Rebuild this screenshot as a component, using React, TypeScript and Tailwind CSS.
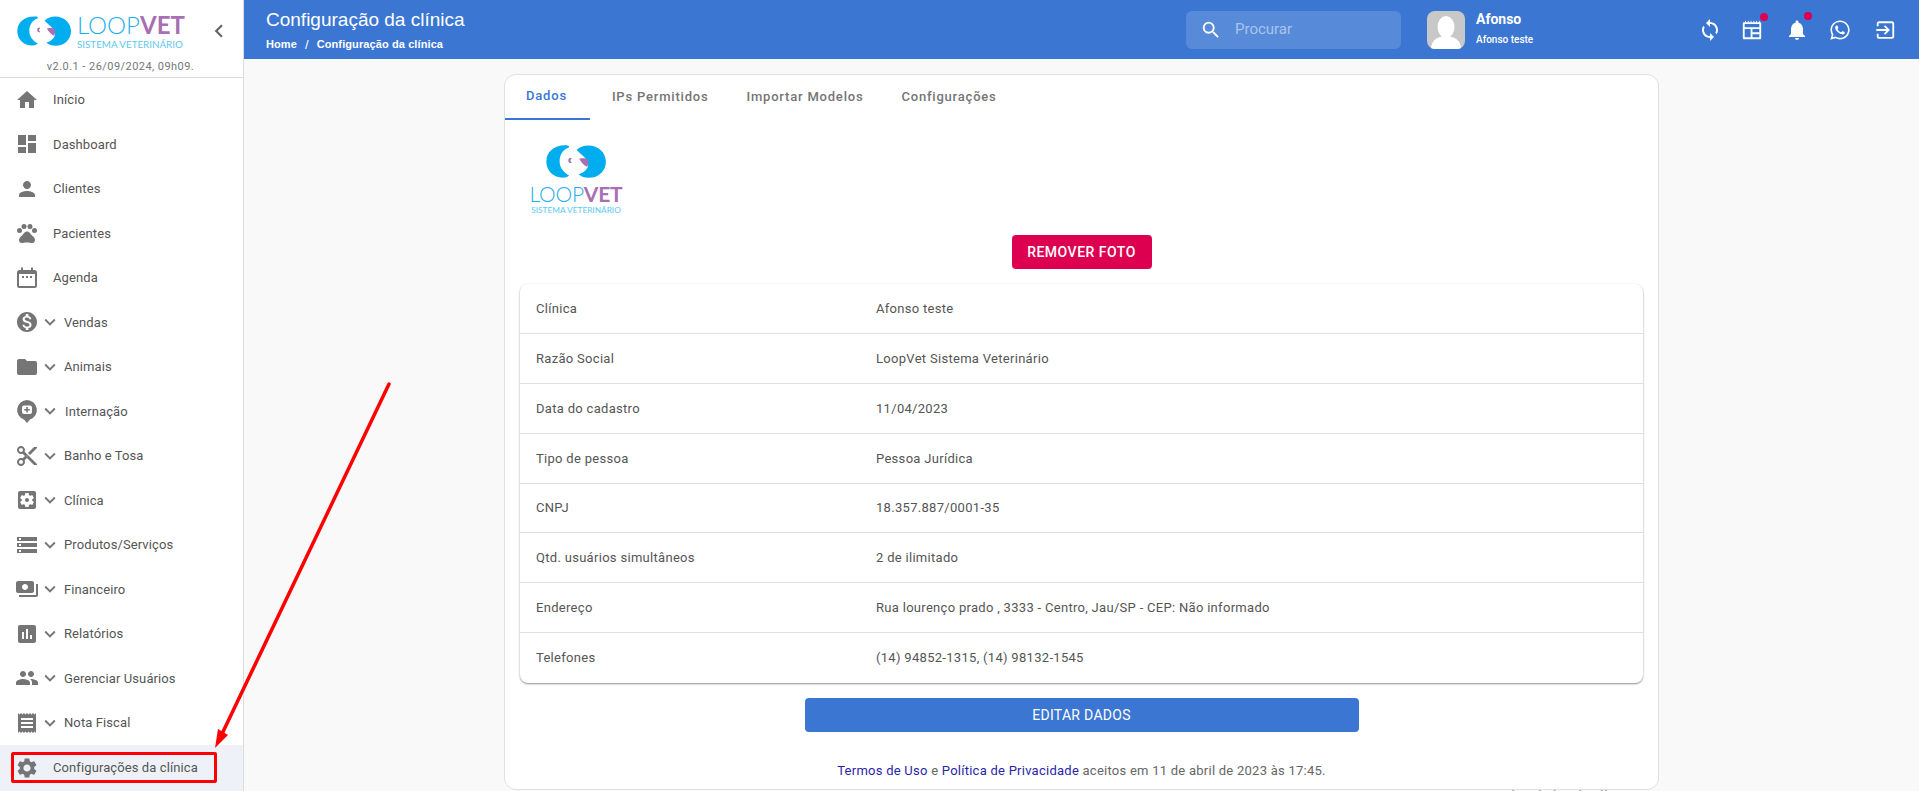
import { FaWhatsapp } from "react-icons/fa";
import {
  MdAssessment,
  MdChevronLeft,
  MdContentCut,
  MdDashboard,
  MdFolder,
  MdHome,
  MdKeyboardArrowDown,
  MdMonetizationOn,
  MdNotifications,
  MdPayments,
  MdPeople,
  MdPerson,
  MdPets,
  MdReceipt,
  MdSearch,
  MdSettings,
  MdSettingsApplications,
  MdStorage,
  MdSync,
} from "react-icons/md";
import type { ComponentType } from "react";

type IconProps = { size?: number; className?: string };

function AgendaIcon({ size = 24, className }: IconProps) {
  return (
    <svg width={size} height={size} viewBox="0 0 24 24" className={className} fill="currentColor">
      <path d="M6 1.500h2v2.500h8V1.500h2V4h1.500A2.500 2.500 0 0 1 22 6.500v13a2.500 2.500 0 0 1-2.500 2.500h-15A2.500 2.500 0 0 1 2 19.500v-13A2.500 2.500 0 0 1 4.500 4H6z" />
      <rect x="4" y="8" width="16" height="12" fill="#fff" />
      <rect x="7" y="10" width="2" height="2" />
      <rect x="11" y="10" width="2" height="2" />
      <rect x="15" y="10" width="2" height="2" />
    </svg>
  );
}

function InternacaoIcon({ size = 24, className }: IconProps) {
  return (
    <svg width={size} height={size} viewBox="0 0 24 24" className={className} fill="currentColor">
      <path d="M12 1a10 10 0 0 1 3 19.500L12 24l-3-3.500A10 10 0 0 1 12 1z" />
      <rect x="7" y="6.500" width="10" height="8.500" rx="2" fill="#fff" />
      <path d="M11.200 8h1.600v2h2v1.600h-2v2h-1.600v-2h-2V10h2z" />
    </svg>
  );
}

function NewsIcon({ size = 24, className }: IconProps) {
  return (
    <svg width={size} height={size} viewBox="0 0 24 24" className={className} fill="none" stroke="currentColor" strokeWidth="2">
      <path d="M3 4.500h18V21H3z" strokeLinejoin="round" />
      <path d="M3 10h18M11.500 10V21M11.500 15.500h9.500" />
      <path d="M5 2v2M8 2v2M11 2v2M14 2v2M17 2v2M20 2v2" strokeWidth="1" />
    </svg>
  );
}

function ExitIcon({ size = 24, className }: IconProps) {
  return (
    <svg width={size} height={size} viewBox="0 0 24 24" className={className} fill="none" stroke="currentColor" strokeWidth="2">
      <path d="M4 8V5a1.500 1.500 0 0 1 1.500-1.500h14A1.500 1.500 0 0 1 21 5v14a1.500 1.500 0 0 1-1.500 1.500h-14A1.500 1.500 0 0 1 4 19v-3" />
      <path d="M2.500 12h13M11.500 7.500l4.500 4.500-4.500 4.500" />
    </svg>
  );
}

function LogoMark({ className }: { className?: string }) {
  return (
    <svg viewBox="0 0 56 30" className={className}>
      <path fill="#00aeef" d="M20 .3C8 -.8 .3 6 .3 15c0 9 7 15 15.500 14.800 2.500 0 4-.7 5.400-2C16 25 12.500 20.500 12.500 15 12.500 9.500 15 4 21 2.200c.5-1 0-1.700-1-1.900z" />
      <path fill="#00aeef" d="M28 4.500C31 1.500 35 .2 39 .2c9 0 16 6.500 16 15 0 8.500-7 14.800-15.500 14.800-4 0-7.500-1-9.500-3.200 3-1 6.500-2.800 8-6 1.500-3 .5-6-1.500-8.300-2.300-2.700-5.500-5-8.500-8z" />
      <path fill="#a86fb3" d="M30.500 12.500c3-.8 6.500-.5 8 .8 1 2 .3 4.800-.8 6.500-2.500-.5-5-3.500-7.200-7.300z" />
      <path fill="#a86fb3" d="M23 11.500a2.500 2.500 0 1 0 0 5l.7-.8a1.700 1.700 0 0 1 0-3.300z" />
    </svg>
  );
}

type NavItem = { label: string; icon: ComponentType<IconProps>; sub?: boolean; wide?: boolean };

const NAV_ITEMS: NavItem[] = [
  { label: "Início", icon: MdHome },
  { label: "Dashboard", icon: MdDashboard },
  { label: "Clientes", icon: MdPerson },
  { label: "Pacientes", icon: MdPets },
  { label: "Agenda", icon: AgendaIcon },
  { label: "Vendas", icon: MdMonetizationOn, sub: true },
  { label: "Animais", icon: MdFolder, sub: true },
  { label: "Internação", icon: InternacaoIcon, sub: true, wide: true },
  { label: "Banho e Tosa", icon: MdContentCut, sub: true },
  { label: "Clínica", icon: MdSettingsApplications, sub: true },
  { label: "Produtos/Serviços", icon: MdStorage, sub: true },
  { label: "Financeiro", icon: MdPayments, sub: true },
  { label: "Relatórios", icon: MdAssessment, sub: true },
  { label: "Gerenciar Usuários", icon: MdPeople, sub: true },
  { label: "Nota Fiscal", icon: MdReceipt, sub: true },
];

const ROWS = [
  ["Clínica", "Afonso teste"],
  ["Razão Social", "LoopVet Sistema Veterinário"],
  ["Data do cadastro", "11/04/2023"],
  ["Tipo de pessoa", "Pessoa Jurídica"],
  ["CNPJ", "18.357.887/0001-35"],
  ["Qtd. usuários simultâneos", "2 de ilimitado"],
  ["Endereço", "Rua lourenço prado , 3333 - Centro, Jau/SP - CEP: Não informado"],
  ["Telefones", "(14) 94852-1315, (14) 98132-1545"],
];

const TABS = ["Dados", "IPs Permitidos", "Importar Modelos", "Configurações"];

function Sidebar() {
  return (
    <aside className="flex w-[244px] shrink-0 flex-col border-r border-[#dcdcdc] bg-white">
      <div className="flex h-[59px] items-center pl-[17px] pt-[4px]">
        <LogoMark className="h-[30px] w-[55px]" />
        <div className="ml-[5px] flex w-[106px] flex-col">
          <span className="text-[24px] leading-[22px] text-[#1cb0ee] font-['Lato',sans-serif] font-light">
            LOOP<span className="font-bold text-[#a86fb3]">VET</span>
          </span>
          <span className="mt-[3px] whitespace-nowrap text-[9.800px] leading-[10px] text-[#5cc8f2] font-['Lato',sans-serif]">SISTEMA VETERINÁRIO</span>
        </div>
        <MdChevronLeft size={26} className="ml-[23px] text-[#666]" />
      </div>
      <div className="flex h-[19px] items-center justify-center border-b border-[#dcdcdc] pb-[1px] pr-[2px] text-[11px] tracking-[0.45px] text-[#777]">
        v2.0.1 - 26/09/2024, 09h09.
      </div>
      <nav className="flex flex-col">
        {NAV_ITEMS.map((item) => (
          <div key={item.label} className="flex h-[44.500px] items-center pl-[14px] text-[13px] tracking-[0.1px] text-[#555]">
            <span className="flex w-[26px] shrink-0 justify-center text-[#757575]">
              <item.icon size={24} />
            </span>
            {item.sub ? (
              <>
                <MdKeyboardArrowDown size={22} className="-ml-[1px] text-[#777]" />
                <span className={item.wide ? "ml-[4px]" : "ml-[3px]"}>{item.label}</span>
              </>
            ) : (
              <span className="ml-[13px]">{item.label}</span>
            )}
          </div>
        ))}
        <div className="flex h-[46px] items-center bg-[#eef2f8] pl-[14px] text-[13px] tracking-[0.1px] text-[#555]">
          <span className="flex w-[26px] shrink-0 justify-center text-[#757575]">
            <MdSettings size={24} />
          </span>
          <span className="ml-[13px]">Configurações da clínica</span>
        </div>
      </nav>
    </aside>
  );
}

function Header() {
  return (
    <header className="flex h-[59px] shrink-0 items-center bg-[#3a76d2] pl-[22px] text-white">
      <div className="w-[920px] font-['Liberation_Sans',sans-serif]">
        <div className="text-[19px] leading-[22px]">Configuração da clínica</div>
        <div className="mt-[7px] flex items-center text-[11px] font-bold leading-[13px] tracking-[0.1px]">
          Home <span className="mx-[8px] text-[13px] font-normal">/</span> Configuração da clínica
        </div>
      </div>
      <div className="flex h-[38px] w-[215px] items-center rounded-md bg-white/15 pl-[14px]">
        <MdSearch size={22} />
        <span className="ml-[13px] text-[15px] text-white/50">Procurar</span>
      </div>
      <div className="ml-[26px] flex h-[38px] w-[38px] items-end justify-center overflow-hidden rounded-lg bg-[#c8c8c8]">
        <svg width="30" height="33" viewBox="0 0 30 33" fill="#fff">
          <ellipse cx="15" cy="11" rx="8.500" ry="11" />
          <path d="M0 33c0-8 6-13 15-13s15 5 15 13z" />
        </svg>
      </div>
      <div className="ml-[11px] w-[222px]">
        <div className="-mt-[2px] text-[14px] font-bold leading-[16px]">Afonso</div>
        <div className="mt-[7px] text-[10px] font-medium leading-[12px]">Afonso teste</div>
      </div>
      <div className="flex items-center gap-[19px]">
        <MdSync size={24} />
        <span className="relative flex">
          <NewsIcon size={22} />
          <span className="absolute -right-[5px] -top-[6px] h-[8px] w-[8px] rounded-full bg-[#de0050]" />
        </span>
        <span className="relative ml-[3px] flex">
          <MdNotifications size={24} />
          <span className="absolute -right-[3px] -top-[6px] h-[8px] w-[8px] rounded-full bg-[#de0050]" />
        </span>
        <FaWhatsapp size={22} className="ml-[1px]" />
        <ExitIcon size={22} className="ml-[4px]" />
      </div>
    </header>
  );
}

function ClinicCard() {
  return (
    <section className="mx-auto mt-[15px] h-[716px] w-[1155px] shrink-0 rounded-xl border border-[#e0e0e0] bg-white text-[13px] tracking-[0.3px]">
      {/* Tabs */}
      <div className="flex h-[45px]">
        {TABS.map((tab, i) => (
          <div
            key={tab}
            className={
              i === 0
                ? "mr-[3px] flex h-[45px] items-center border-b-2 border-[#3a76d2] pb-[2px] pl-[21px] pr-[23px] font-medium tracking-[0.8px] text-[#3a76d2]"
                : "flex h-[45px] items-center px-[19px] pb-[2px] font-medium tracking-[0.8px] text-[#757575]"
            }
          >
            {tab}
          </div>
        ))}
      </div>

      {/* Logo */}
      <div className="ml-[25px] mt-[25px] flex w-[92px] flex-col items-center">
        <LogoMark className="h-[33px] w-[61px]" />
        <span className="mt-[8px] text-[21px] leading-[15px] tracking-[-0.2px] text-[#1cb0ee] font-['Lato',sans-serif] font-light">
          LOOP<span className="font-bold text-[#a86fb3]">VET</span>
        </span>
        <span className="mt-[4px] whitespace-nowrap text-[8.300px] leading-[10px] tracking-[0] text-[#5cc8f2] font-['Lato',sans-serif]">SISTEMA VETERINÁRIO</span>
      </div>

      <div className="mt-[20px] flex justify-center">
        <button className="h-[34px] w-[140px] rounded bg-[#de0050] text-[14px] font-medium tracking-[0.5px] text-white">REMOVER FOTO</button>
      </div>

      {/* Dados da clinica */}
      <div className="mx-[15px] mt-[15px] rounded-lg bg-white text-[#555] shadow-[0_1px_2px_rgba(0,0,0,0.45)]">
        {ROWS.map(([label, value], i) => {
          const height = i === 4 ? "h-[49px]" : "h-[50px]";
          const border = i < ROWS.length - 1 ? "border-b border-[#e0e0e0]" : "";
          return (
            <div key={label} className={`flex items-center pl-[16px] ${height} ${border}`}>
              <span className="w-[340px]">{label}</span>
              <span>{value}</span>
            </div>
          );
        })}
      </div>

      <div className="mt-[15px] flex justify-center">
        <button className="h-[34px] w-[554px] rounded bg-[#3a76d2] text-[14px] tracking-[0.3px] text-white">EDITAR DADOS</button>
      </div>

      <p className="mt-[29px] text-center tracking-[0.25px] text-[#666]">
        <span className="text-[#2a1fa8]">Termos de Uso</span> e <span className="text-[#2a1fa8]">Política de Privacidade</span> aceitos em 11 de abril de 2023 às 17:45.
      </p>
      <p className="mr-[26px] mt-[5px] text-right tracking-[0.25px] text-[#888]">Excluir dados da clínica</p>
    </section>
  );
}

export default function App() {
  return (
    <div className="relative flex h-[791px] w-full overflow-hidden bg-[#f9f9f9] font-['Roboto',sans-serif]">
      <Sidebar />
      <main className="flex min-w-0 flex-1 flex-col">
        <Header />
        <ClinicCard />
      </main>

      {/* Anotacao em vermelho */}
      <div className="absolute left-[11px] top-[752px] h-[31px] w-[206px] rounded-[2px] border-[3px] border-[#f00]" />
      <svg className="absolute inset-0 h-[791px] w-[1919px]" viewBox="0 0 1919 791" fill="none">
        <path d="M389 384 L221 736" stroke="#f00" strokeWidth="3.500" strokeLinecap="round" />
        <path d="M215 748 L218 729 L228 735 Z" fill="#f00" />
      </svg>
    </div>
  );
}
